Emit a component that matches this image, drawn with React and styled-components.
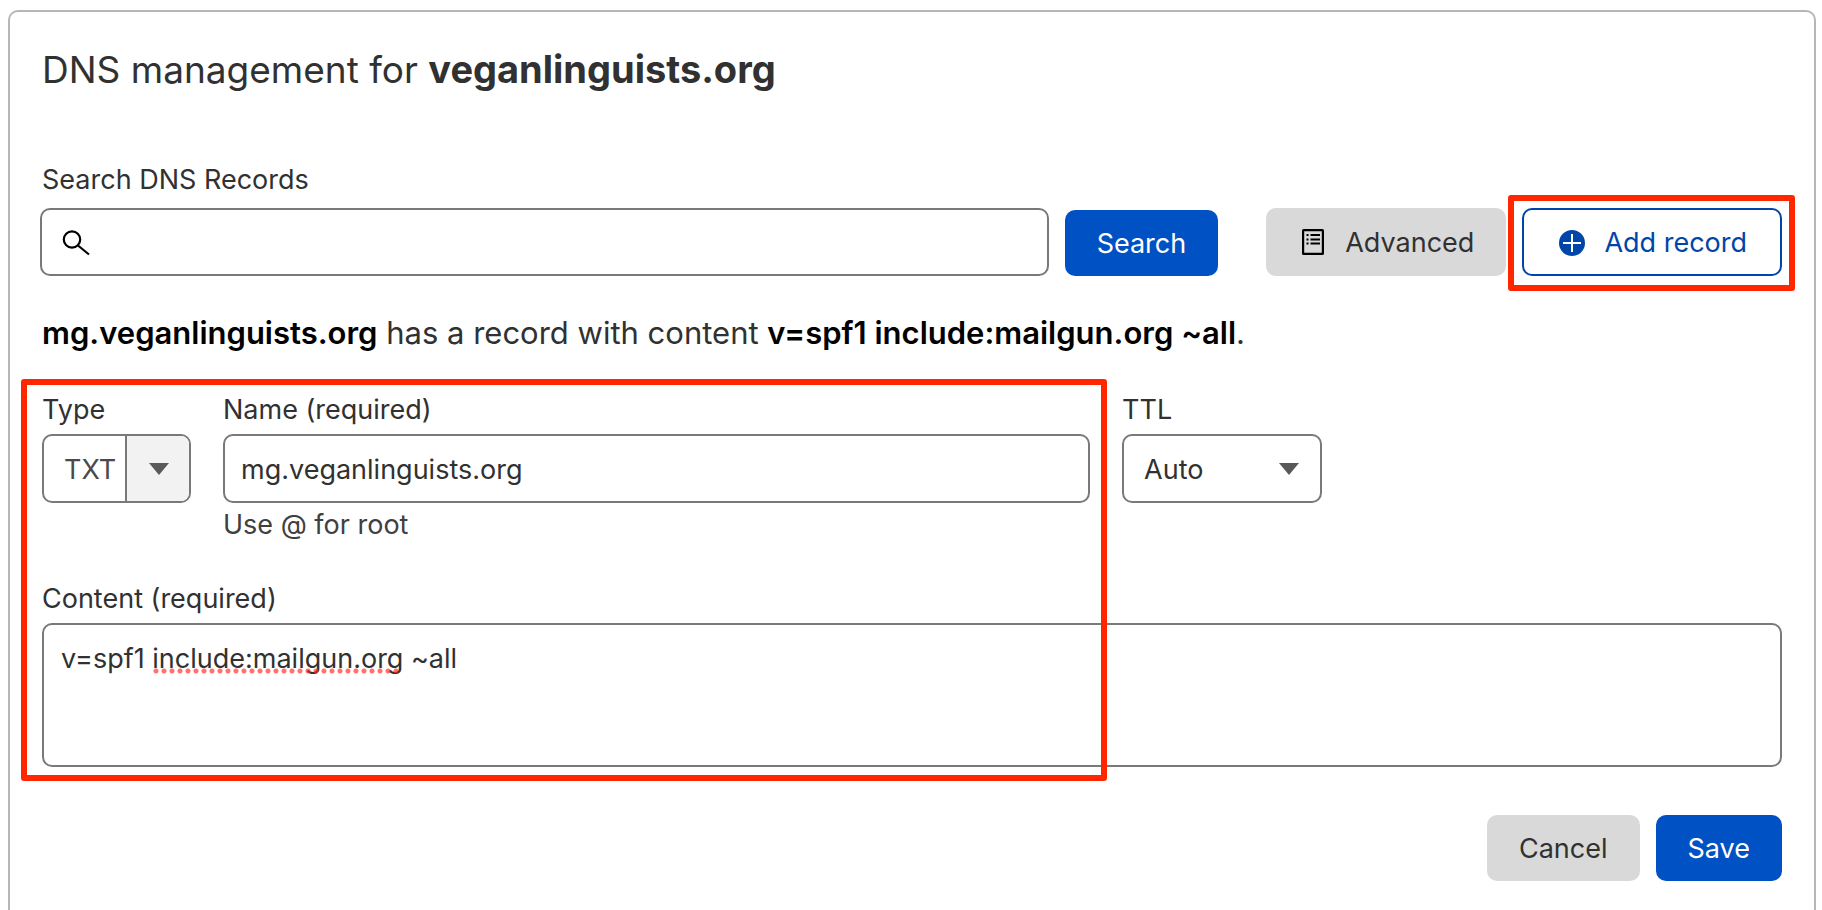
import React, { useState } from 'react';
import styled, { createGlobalStyle, css } from 'styled-components';

const GlobalStyle = createGlobalStyle`
  *, *::before, *::after {
    box-sizing: border-box;
  }

  body {
    margin: 0;
    padding: 10px 6px 0 8px;
    background-color: #fff;
    color: #313131;
    font-family: Inter, "Liberation Sans", sans-serif;
    font-size: 27px;
    line-height: 32px;
  }

  button, input, select, textarea {
    font: inherit;
    color: inherit;
  }
`

const Panel = styled.main`
  min-height: calc(100vh - 10px);
  padding: 33px 32px 26px;
  border: 2px solid #b6b6b6;
  border-bottom: none;
  border-radius: 10px 10px 0 0;
`

const Title = styled.h1`
  margin: 0 0 70px;
  font-size: 37px;
  font-weight: 400;
  line-height: 48px;

  strong {
    font-size: 38px;
    font-weight: 700;
  }
`

const Label = styled.label`
  display: block;
  margin-bottom: 8px;
`

const SearchLabel = styled(Label)`
  margin-bottom: 12px;
`

const SearchBar = styled.form`
  display: flex;
  align-items: flex-end;
  gap: 16px;
  margin: 0 0 39px -2px;
`

const box = css`
  border: 2px solid #797979;
  border-radius: 10px;
  background-color: #fff;
`

const SearchField = styled.div`
  ${box}
  display: flex;
  align-items: center;
  flex: 1;
  min-width: 0;
  height: 68px;
  padding-left: 18px;

  input {
    flex: 1;
    min-width: 0;
    height: 100%;
    padding: 0 16px;
    border: none;
    outline: none;
    background: none;
  }
`

const Icon = styled.svg`
  flex: none;
  width: 30px;
  height: 30px;
`

const variants = {
  primary: css`
    background-color: #0051c3;
    color: #fff;
  `,
  secondary: css`
    background-color: #d9d9d9;
  `,
  outline: css`
    padding: 2px 33px 0;
    border: 2px solid #0045a8;
    background-color: #fff;
    color: #0045a8;
  `,
}

const Button = styled.button`
  display: inline-flex;
  align-items: center;
  gap: 17px;
  height: ${({ $tall }) => ($tall ? 68 : 66)}px;
  padding: 2px 32px 0;
  border: none;
  border-radius: 10px;
  white-space: nowrap;
  cursor: pointer;
  ${({ $variant }) => variants[$variant]}
`

const Tools = styled.div`
  display: flex;
  gap: 16px;
  margin-left: 32px;
`

// Red frames that point out the parts of the form to fill in
const frame = css`
  border: 6px solid #ff2600;
  border-radius: 3px;
  pointer-events: none;
`

const Marked = styled.div`
  position: relative;

  &::after {
    ${frame}
    content: '';
    position: absolute;
    inset: -13px -13px -15px -14px;
  }
`

const Summary = styled.p`
  margin: 0 0 43px;
  font-size: 31px;
  line-height: 36px;

  strong {
    color: #000;
    font-weight: 600;
  }
`

const RecordForm = styled.form`
  display: grid;
  grid-template-columns: 149px 77fr 200px 38fr;
  column-gap: 32px;
`

const Field = styled.div`
  grid-column: ${({ $column }) => $column};
  grid-row: 1;
  min-width: 0;
  padding-bottom: 42px;
`

const ContentField = styled.div`
  grid-column: 1 / -1;
  grid-row: 2;
  position: relative;
`

const FormFrame = styled.div`
  ${frame}
  grid-column: 1 / 3;
  grid-row: 1 / 3;
  z-index: 1;
  margin: -15px -17px -14px -21px;
`

const TextInput = styled.input`
  ${box}
  display: block;
  width: 100%;
  height: 69px;
  padding: 2px 16px 0;
`

const TextArea = styled.textarea`
  ${box}
  display: block;
  width: 100%;
  height: 144px;
  padding: 18px 17px;
  resize: none;
`

const Hint = styled.p`
  margin: 6px 0 0;
  color: #404040;
`

const Misspelling = styled.span`
  position: absolute;
  top: 85px;
  left: 111px;
  width: 248px;
  height: 6px;
  background: radial-gradient(circle at 3px 3px, rgba(255, 38, 30, 0.65) 2px, transparent 3px) 0 0 / 8px 6px;
  pointer-events: none;
`

const SelectBox = styled.div`
  ${box}
  position: relative;
  height: 69px;
  overflow: hidden;

  select {
    width: 100%;
    height: 100%;
    padding: 2px 20px 0;
    border: none;
    background: none;
    color: ${({ $split }) => ($split ? '#4a4a4a' : 'inherit')};
    appearance: none;
  }
`

const ArrowBox = styled.span`
  position: absolute;
  top: 0;
  right: 0;
  display: flex;
  align-items: center;
  justify-content: center;
  width: 64px;
  height: 100%;
  padding-left: 2px;
  pointer-events: none;
  ${({ $split }) => $split && css`
    border-left: 2px solid #797979;
    background-color: #f2f2f2;
  `}
`

const Actions = styled.div`
  grid-column: 1 / -1;
  grid-row: 3;
  display: flex;
  justify-content: flex-end;
  gap: 16px;
  margin-top: 48px;
`

const SearchIcon = () => (
  <Icon viewBox="0 0 30 30" fill="none" stroke="#000" strokeWidth="2.2" aria-hidden="true">
    <circle cx="12" cy="12.5" r="8.2" />
    <path d="M18 18.5l11 9" />
  </Icon>
)

const ListIcon = () => (
  <Icon viewBox="0 0 30 30" fill="none" stroke="#000" strokeWidth="2.2" aria-hidden="true">
    <rect x="5.1" y="2.1" width="19.8" height="23.8" rx="0.5" />
    <path strokeWidth="1.8" d="M8.5 7h2M12.5 7h9.5M8.5 11.5h2M12.5 11.5h9.5M8.5 15.5h2M12.5 15.5h9.5" />
  </Icon>
)

const PlusIcon = () => (
  <Icon viewBox="0 0 30 30" aria-hidden="true">
    <circle cx="15" cy="15" r="13" fill="#0045a8" />
    <path d="M15 6v18M6 15h18" stroke="#fff" strokeWidth="2" />
  </Icon>
)

const Arrow = () => (
  <svg width="20" height="12" viewBox="0 0 20 12" aria-hidden="true">
    <path d="M0 0h20L10 12z" fill="#595959" />
  </svg>
)

const Select = ({ id, options, split }) => (
  <SelectBox $split={split}>
    <select id={id}>
      {options.map(option => <option key={option}>{option}</option>)}
    </select>
    <ArrowBox $split={split}><Arrow /></ArrowBox>
  </SelectBox>
)

const App = () => {
  const [name, setName] = useState('mg.veganlinguists.org')
  const [content, setContent] = useState('v=spf1 include:mailgun.org ~all')

  return (
    <>
      <GlobalStyle />
      <Panel>
        <Title>DNS management for <strong>veganlinguists.org</strong></Title>
        <SearchLabel htmlFor="search">Search DNS Records</SearchLabel>
        <SearchBar onSubmit={e => e.preventDefault()}>
          <SearchField>
            <SearchIcon />
            <input id="search" type="text" />
          </SearchField>
          <Button type="submit" $variant="primary">Search</Button>
          <Tools>
            <Button type="button" $variant="secondary" $tall><ListIcon />Advanced</Button>
            <Marked>
              <Button type="button" $variant="outline" $tall><PlusIcon />Add record</Button>
            </Marked>
          </Tools>
        </SearchBar>
        <Summary>
          <strong>{name}</strong> has a record with content <strong>{content}</strong>.
        </Summary>
        <RecordForm onSubmit={e => e.preventDefault()}>
          <Field $column={1}>
            <Label htmlFor="type">Type</Label>
            <Select id="type" options={['TXT']} split />
          </Field>
          <Field $column={2}>
            <Label htmlFor="name">Name (required)</Label>
            <TextInput id="name" type="text" value={name} onChange={e => setName(e.target.value)} />
            <Hint>Use @ for root</Hint>
          </Field>
          <Field $column={3}>
            <Label htmlFor="ttl">TTL</Label>
            <Select id="ttl" options={['Auto']} />
          </Field>
          <ContentField>
            <Label htmlFor="content">Content (required)</Label>
            <TextArea id="content" spellCheck={false} value={content} onChange={e => setContent(e.target.value)} />
            <Misspelling />
          </ContentField>
          <FormFrame />
          <Actions>
            <Button type="button" $variant="secondary">Cancel</Button>
            <Button type="submit" $variant="primary">Save</Button>
          </Actions>
        </RecordForm>
      </Panel>
    </>
  )
}

export default App;
